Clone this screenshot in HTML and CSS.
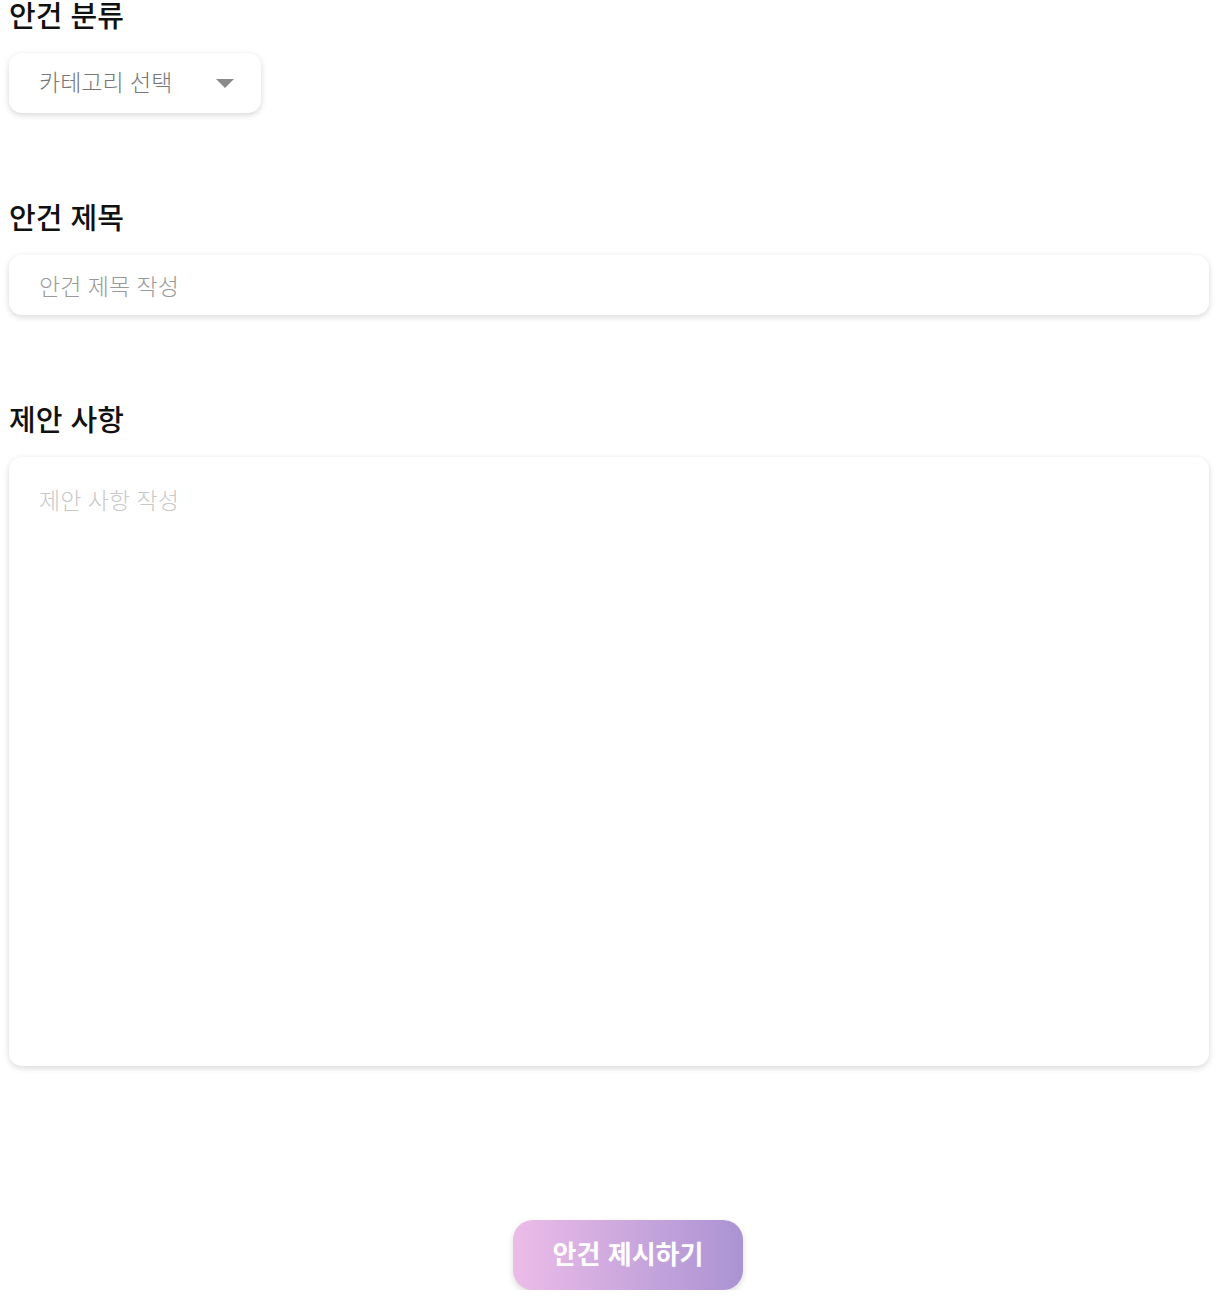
FILE: index.html
```html
<!DOCTYPE html>
<html lang="ko">

<head>
    <meta charset="utf-8">
    <meta name="viewport" content="width=device-width, initial-scale=1.0">
    <title>안건 제시</title>
    <link rel="stylesheet" href="styles.css">
</head>

<body>
    <div id="container">
        <!-- 안건 분류 -->
        <div class="felt">
            <h2 class="overskrift">안건 분류</h2>
            <div class="vaelg">
                <span class="vaelg-tekst">카테고리 선택</span>
                <svg class="pil" width="18" height="9" viewBox="0 0 18 9">
                    <path d="M0 0 H18 L9 9 Z" fill="#8a8a8a" />
                </svg>
            </div>
        </div>

        <!-- 안건 제목 -->
        <div class="felt">
            <h2 class="overskrift">안건 제목</h2>
            <input class="tekstfelt" type="text" placeholder="안건 제목 작성">
        </div>

        <!-- 제안 사항 -->
        <div class="felt">
            <h2 class="overskrift">제안 사항</h2>
            <textarea class="tekstboks" placeholder="제안 사항 작성"></textarea>
        </div>

        <div class="knaprad">
            <button class="send">안건 제시하기</button>
        </div>
    </div>
</body>

</html>
```

FILE: styles.css
```css
body {
    margin: 0;
    padding: 0;
    background-color: #ffffff;
    font-family: "Noto Sans CJK KR", "Noto Sans", sans-serif;
}

#container {
    width: 1200px;
    padding: 0 9px;
}

.felt {
    margin-bottom: 89px;
}

.overskrift {
    margin: 0 0 25px 0;
    font-size: 29px;
    line-height: 28px;
    font-weight: 500;
    color: #111111;
}

.vaelg {
    width: 252px;
    height: 60px;
    box-sizing: border-box;
    padding: 0 27px 0 30px;
    display: flex;
    align-items: center;
    justify-content: space-between;
    border-radius: 13px;
    background-color: #ffffff;
    box-shadow: 0 2px 6px rgba(0, 0, 0, 0.16);
    font-size: 23px;
    font-weight: 300;
    color: #777777;
}

.vaelg-tekst {
    margin-bottom: 5px;
}

.tekstfelt,
.tekstboks {
    display: block;
    width: 100%;
    box-sizing: border-box;
    border: none;
    outline: none;
    border-radius: 13px;
    background-color: #ffffff;
    box-shadow: 0 2px 6px rgba(0, 0, 0, 0.16);
    font-family: "Noto Sans CJK KR", "Noto Sans", sans-serif;
    font-size: 23px;
    font-weight: 300;
    color: #333333;
}

.tekstfelt {
    height: 60px;
    padding: 0 30px;
}

.tekstfelt::placeholder {
    color: #999999;
}

.tekstboks {
    height: 609px;
    padding: 26px 30px;
    line-height: 33px;
    resize: none;
}

.tekstboks::placeholder {
    color: #c8c8c8;
}

.knaprad {
    display: flex;
    justify-content: center;
    padding-left: 38px;
    padding-top: 65px;
}

.send {
    width: 230px;
    height: 70px;
    padding: 0 0 5px 0;
    border: none;
    border-radius: 20px;
    background-image: linear-gradient(90deg, #ecbce8, #aa93d3);
    box-shadow: 0 3px 6px rgba(0, 0, 0, 0.14);
    font-family: "Noto Sans CJK KR", "Noto Sans", sans-serif;
    font-size: 26px;
    font-weight: 700;
    color: #ffffff;
}
```
